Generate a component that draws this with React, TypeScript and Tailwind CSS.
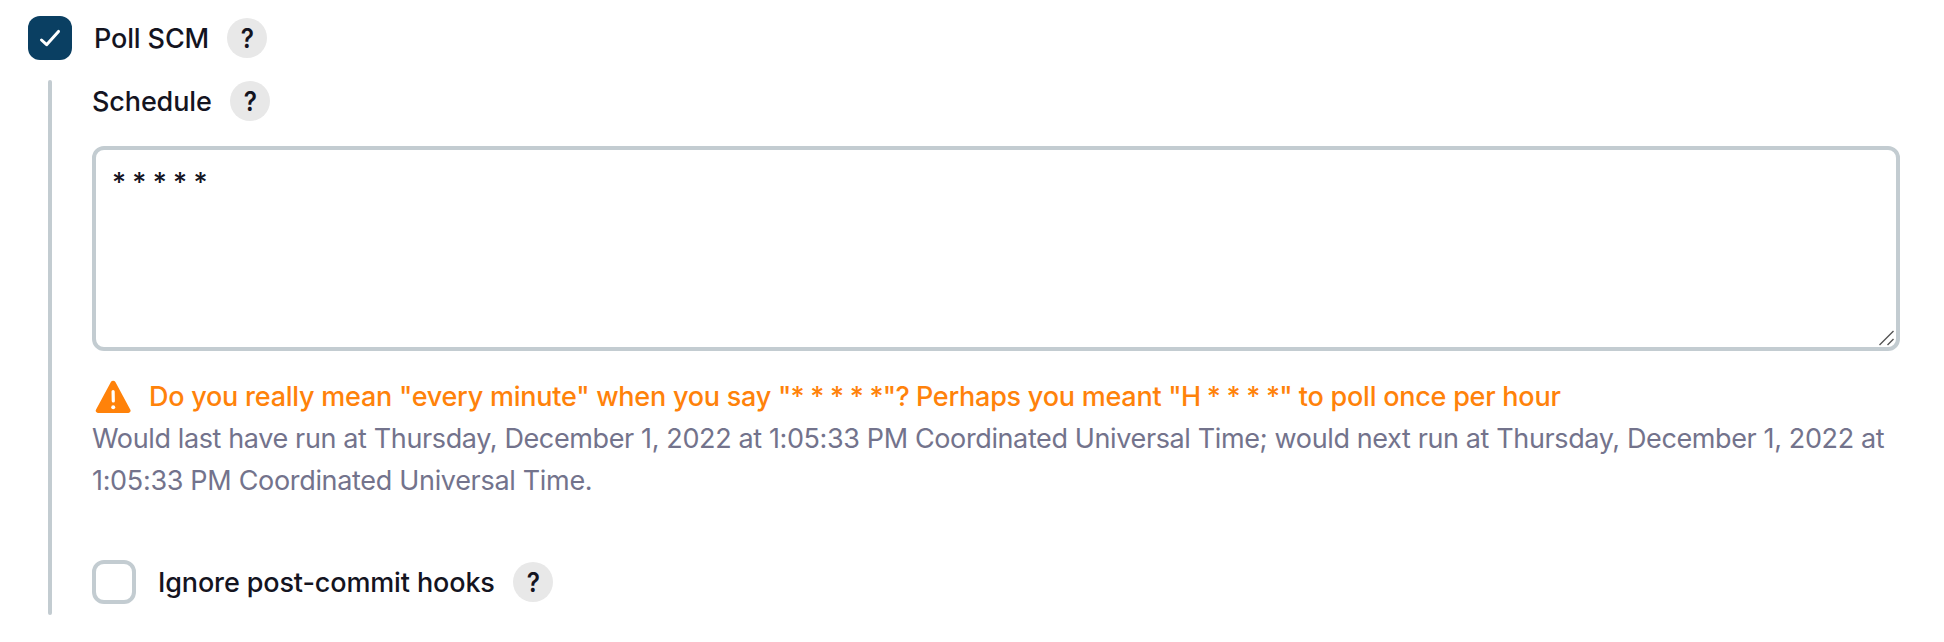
function Help() {
  return (
    <button
      type="button"
      className="flex size-10 shrink-0 items-center justify-center rounded-full bg-[#e8e8e8] pt-px text-[27px] leading-none font-semibold"
    >
      <span className="scale-x-90">?</span>
    </button>
  );
}

export default function App() {
  return (
    <div className="h-[642px] w-[1944px] bg-white pt-4 pl-7 font-['Inter',sans-serif] text-[27px] leading-[42px] font-medium tracking-[-0.13px] text-[#14141f]">
      <div className="flex h-11 items-center">
        <span className="flex size-11 items-center justify-center rounded-xl bg-[#0a3f62]">
          <svg width="44" height="44" viewBox="0 0 44 44" fill="none">
            <path d="M13.5 24 18.6 28.7 30.5 15.4" stroke="#fff" strokeWidth="3" strokeLinecap="round" strokeLinejoin="round" />
          </svg>
        </span>
        <span className="ml-[22px] w-[133px] pt-0.5 whitespace-nowrap">Poll SCM</span>
        <Help />
      </div>

      <div className="mt-5 ml-5 flex h-[535px]">
        <div className="w-1 shrink-0 rounded-full bg-[#c3ccd1]" />
        <div className="ml-10 w-[1808px]">
          <div className="flex h-[42px] items-center">
            <span className="w-[138px] pt-0.5 whitespace-nowrap">Schedule</span>
            <Help />
          </div>
          <div className="relative mt-6">
            <textarea
              defaultValue="* * * * *"
              spellCheck={false}
              className="block h-[205px] w-full resize-none rounded-xl border-4 border-[#c3ccd1] bg-white px-4 py-3 text-[27px] leading-[42px] tracking-[-0.45px] outline-none"
            />
            <svg width="18" height="18" viewBox="0 0 18 18" className="absolute right-1 bottom-1">
              <path d="M1.5 16 15.5 2M9.5 16 15.5 10" stroke="#555" strokeWidth="1.4" />
            </svg>
          </div>
          <div className="mt-[25px] flex h-[42px] items-center whitespace-nowrap text-[#ff820a]">
            <svg width="36" height="34" viewBox="0 0 36 34" className="mr-[18px] ml-[3px] shrink-0">
              <path
                d="M15.9 2.1a2.6 2.6 0 0 1 4.5 0L35.2 29.6a2.2 2.2 0 0 1-1.9 3.4H3a2.2 2.2 0 0 1-1.9-3.4Z"
                fill="currentColor"
              />
              <path d="M18.1 11.5 18.3 21" stroke="#fff" strokeWidth="3.2" strokeLinecap="round" />
              <circle cx="18.2" cy="27.3" r="2" fill="#fff" />
            </svg>
            <span className="font-[450] tracking-[-0.24px]">
              Do you really mean "every minute" when you say <span className="tracking-[-0.75px]">"* * * * *"?</span> Perhaps you meant{" "}
              <span className="tracking-[-0.75px]">"H * * * *"</span> to poll once per hour
            </span>
          </div>
          <div className="font-normal whitespace-nowrap text-[#73738c]">
            <p className="tracking-[-0.377px]">
              Would last have run at Thursday, December 1, 2022 at 1:05:33 PM Coordinated Universal Time; would next run at Thursday, December 1, 2022 at
            </p>
            <p className="tracking-[-0.32px]">1:05:33 PM Coordinated Universal Time.</p>
          </div>
          <div className="mt-[58px] flex h-11 items-center">
            <span className="size-11 rounded-xl border-4 border-[#c3ccd1]" />
            <span className="ml-[22px] w-[355px] pt-0.5 whitespace-nowrap">Ignore post-commit hooks</span>
            <Help />
          </div>
        </div>
      </div>
    </div>
  );
}
